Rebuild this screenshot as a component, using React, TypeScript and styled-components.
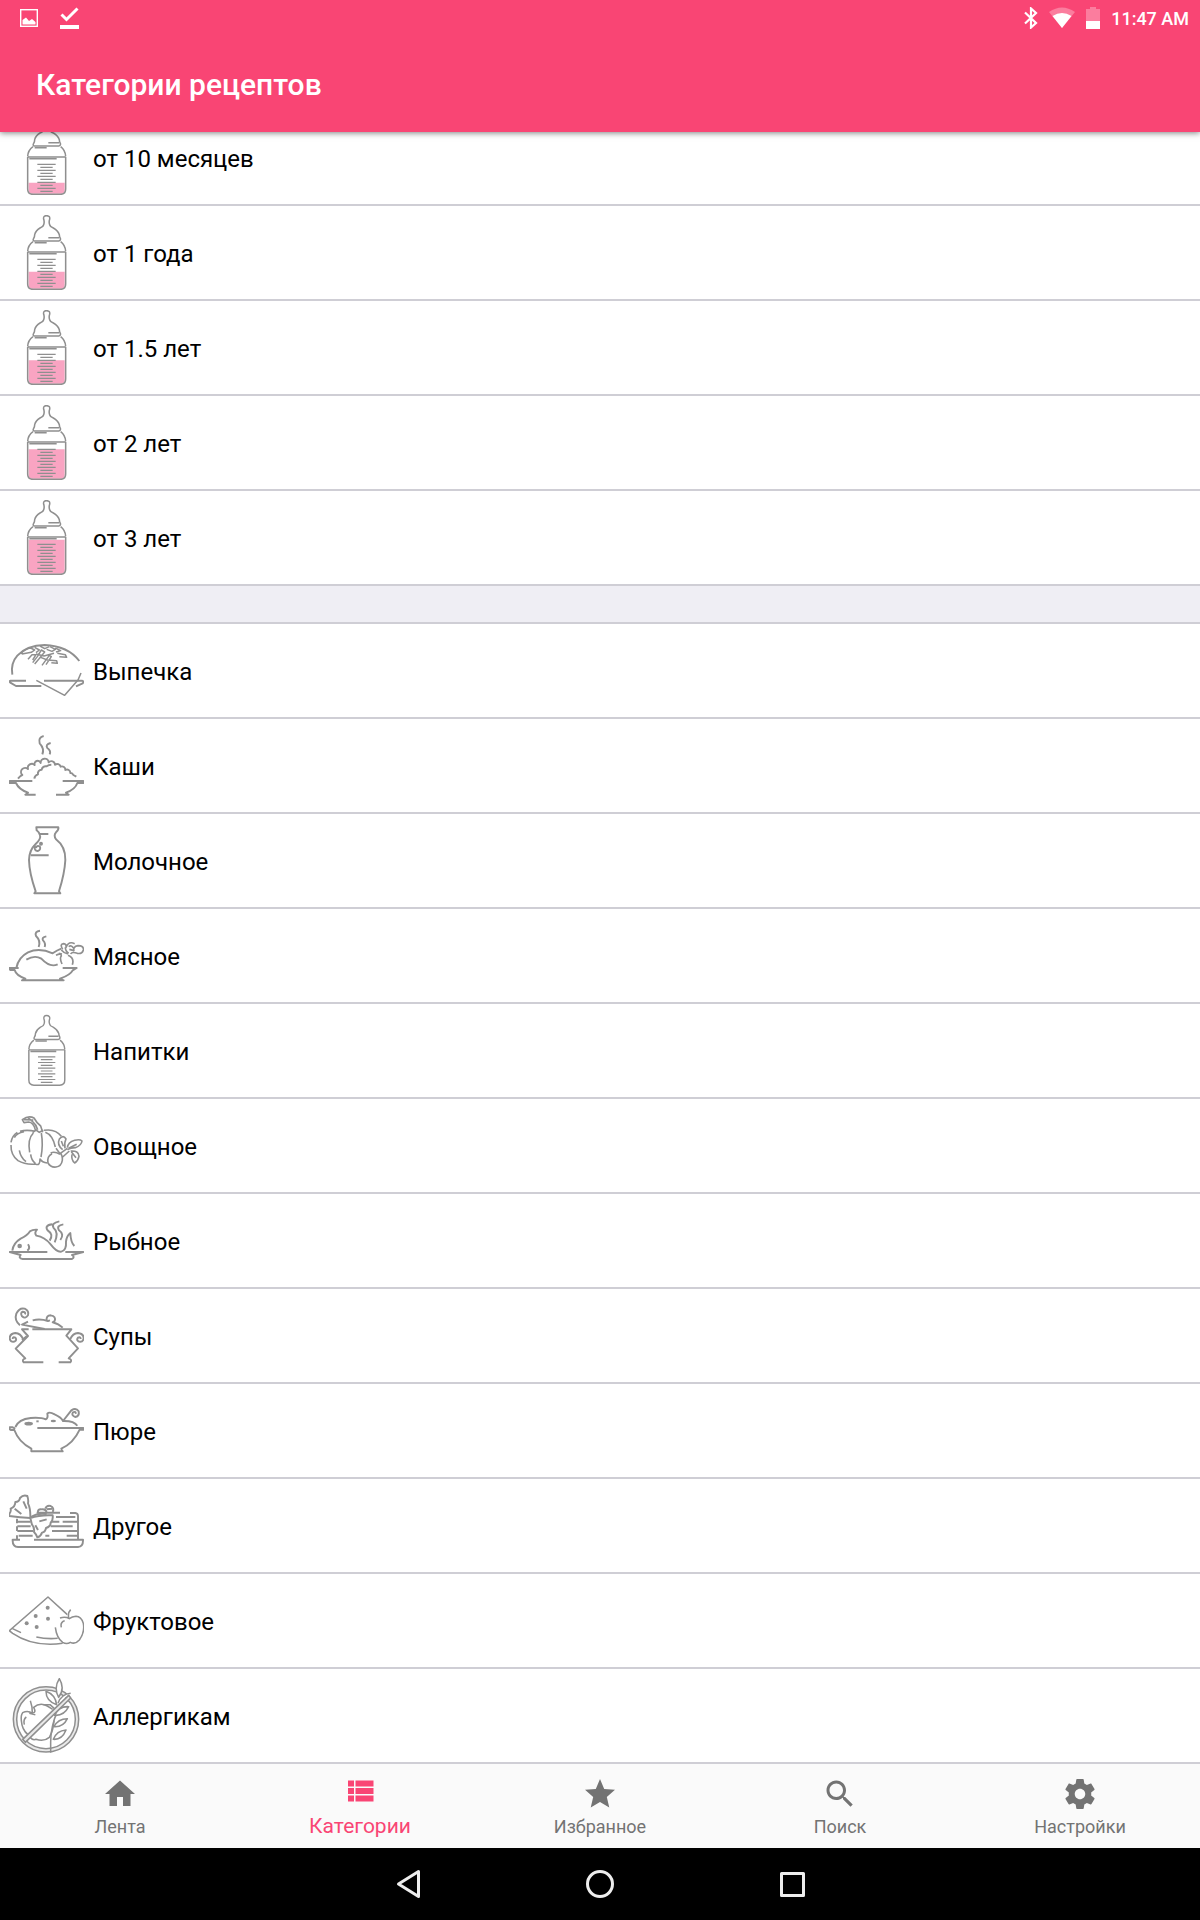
import React, { useLayoutEffect, useRef, useState } from "react";
import styled, { createGlobalStyle } from "styled-components";

const colors = {
  accent: "#f94574",
  divider: "#cfced5",
  gap: "#efeef4",
  bar: "#fafafa",
  muted: "#737373",
  line: "#8f8f8f",
  milk: "#f9a4c2",
};

const GlobalStyle = createGlobalStyle`
  *, *::before, *::after { box-sizing: border-box; }
  body {
    margin: 0;
    background: #fff;
    color: #000;
    font-family: Roboto, "Noto Sans", sans-serif;
  }
  button {
    margin: 0;
    padding: 0;
    border: 0;
    background: none;
    color: inherit;
    font: inherit;
    cursor: pointer;
  }
`;

const Screen = styled.div`
  display: flex;
  flex-direction: column;
  height: 100vh;
`;

const Header = styled.header`
  position: relative;
  z-index: 1;
  flex: none;
  background: ${colors.accent};
  color: #fff;
  box-shadow: 0 1px 6px rgba(0, 0, 0, 0.5);
`;

const StatusBar = styled.div`
  display: flex;
  justify-content: space-between;
  align-items: center;
  height: 36px;
  padding: 0 11px 0 20px;
`;

const StatusGroup = styled.div<{ $gap: number }>`
  display: flex;
  align-items: center;
  gap: ${(p) => p.$gap}px;
`;

const Clock = styled.span`
  padding-top: 2px;
  font-size: 18px;
  font-weight: 500;
  line-height: 24px;
`;

const Toolbar = styled.div`
  display: flex;
  align-items: center;
  height: 96px;
  padding: 2px 36px 0;
`;

const Title = styled.h1`
  margin: 0;
  font-size: 30px;
  font-weight: 500;
  line-height: 36px;
`;

const Content = styled.main`
  flex: 1;
  min-height: 0;
  overflow-y: auto;
  scrollbar-width: none;
`;

const List = styled.ul`
  margin: 0;
  padding: 0;
  list-style: none;

  & + & {
    border-top: 36px solid ${colors.gap};
  }
`;

const Item = styled.li`
  border-bottom: 2px solid ${colors.divider};

  ${List} + ${List} > &:first-child {
    border-top: 2px solid ${colors.divider};
  }
`;

const Row = styled.button`
  display: flex;
  align-items: center;
  gap: 9px;
  width: 100%;
  padding: 9px;
  text-align: left;
`;

const RowLabel = styled.span`
  padding-top: 2px;
  font-size: 24px;
  line-height: 30px;
`;

const Picture = styled.svg`
  flex: none;
  width: 75px;
  height: 75px;
  fill: none;
  stroke: ${colors.line};
  stroke-width: 5.8;
  stroke-linejoin: round;
`;

const TabBar = styled.nav`
  display: flex;
  flex: none;
  height: 84px;
  background: ${colors.bar};
`;

const Tab = styled.button<{ $active: boolean }>`
  display: flex;
  flex: 1;
  flex-direction: column;
  align-items: center;
  justify-content: space-between;
  padding: ${(p) => (p.$active ? 9 : 12)}px 0 9px;
  color: ${(p) => (p.$active ? colors.accent : colors.muted)};
  font-size: ${(p) => (p.$active ? 21 : 18)}px;
  line-height: ${(p) => (p.$active ? 26 : 24)}px;
`;

const TabIcon = styled.svg`
  width: 36px;
  height: 36px;
  fill: currentColor;
`;

const SystemBar = styled.footer`
  display: flex;
  flex: none;
  justify-content: center;
  height: 72px;
  background: #000;
`;

const SystemButton = styled.button`
  display: flex;
  align-items: center;
  justify-content: center;
  width: 192px;
`;

const SystemIcon = styled.svg`
  width: 36px;
  height: 36px;
  fill: none;
  stroke: #eee;
  stroke-width: 3;
  stroke-linejoin: round;
`;

/* Baby bottle, filled from the given level down to the bottom. */
const Bottle = ({ level, viewBox = "27 45 225 225" }: { level?: number; viewBox?: string }) => (
  <Picture viewBox={viewBox} aria-hidden="true">
    {level !== undefined && (
      <path
        d={`M86 ${level} H194 V254 Q194 266 183 266 H97 Q86 266 86 254 Z`}
        fill={colors.milk}
        stroke="none"
      />
    )}
    <g strokeWidth="4.6">
      <path d="M131 74 Q134 66 131 58 Q129 47 139 47 Q151 47 149 58 Q146 66 149 74 Q150 80 160 84 Q174 92 178 104 Q178 110 181 115 Q183 122 176 123 H104 Q97 122 101 115 Q104 110 104 104 Q107 92 120 84 Q130 80 131 74" />
      <path d="M145 113 H177 M104 128 H140 M99 125 Q84 136 83 154 M182 125 Q196 136 197 154 M83 156 H197 M88 161 H170" />
      <path d="M83 156 V252 Q83 268 99 268 H181 Q197 268 197 252 V156" />
    </g>
    <path
      d="M112 178 H167 M121 187 H158 M112 196 H167 M121 205 H158 M112 214 H167 M121 223 H158 M112 232 H167 M121 241 H158 M112 250 H167 M121 259 H158"
      strokeWidth="3.8"
    />
  </Picture>
);

const Bread = () => (
  <Picture viewBox="27 39 225 225" aria-hidden="true">
    <path d="M37 164 Q31 130 52 107 Q80 76 134 75 Q204 78 238 123" />
    <path d="M78 182 H32 Q26 183 31 188 L48 198 H124 M132 182 H246 Q253 184 248 190 L228 199" />
    <path d="M109 181 L194 226 L234 180 L243 159" strokeWidth="4.6" />
    <path
      d="M62 102 Q74 86 92 84 L104 90 L94 97 L66 102 M104 82 L118 90 L108 98 M120 78 L134 86 L148 80 M150 80 L166 88 L156 94 L140 88 M166 84 L182 92 L168 96 M172 100 L196 104 L200 112 L178 110 M84 118 L96 104 L108 104 L98 120 M98 128 L112 110 L124 90 L134 96 L116 118 L104 132 M126 136 L148 106 L154 110 L138 134 M122 112 L142 120 L170 122 L172 130 L154 128 M108 102 L132 108 L162 100"
      strokeWidth="4.4"
    />
  </Picture>
);

const Porridge = () => (
  <Picture viewBox="27 324 225 225" aria-hidden="true">
    <path d="M131 348 Q114 352 119 370 Q134 386 127 403 M152 369 Q135 373 142 384 Q154 392 149 403" />
    <path d="M54 476 Q61 467 67 465 A12 12 0 0 1 84 447 A12 12 0 0 1 104 435 A9 9 0 0 1 122 429 A12 12 0 0 1 146 427 A11 11 0 0 1 165 434 A11 11 0 0 1 182 440 A10 10 0 0 1 196 450 A10 10 0 0 1 211 459 A9 9 0 0 1 220 465 L229 470" />
    <path d="M103 476 Q104 466 114 463 A11 11 0 0 1 125 449 A12 12 0 0 1 140 439 Q146 434 154 434" />
    <path d="M97 483 H29 V489 H48 Q56 508 84 518 L76 524 H107 M188 483 H250 V489 H232 Q226 508 198 518 L206 524 H168" />
  </Picture>
);

const Jug = () => (
  <Picture viewBox="27 39 225 225" aria-hidden="true">
    <path d="M109 52 H175 Q177 59 168 67 Q160 76 168 88 Q197 110 196 150 Q194 190 177 244 L181 250 H103 L107 244 Q88 190 87 150 Q88 120 107 102 Q124 86 120 76 Q117 66 110 61 Z" />
    <path d="M119 72 H145 M92 136 H146 M104 106 Q102 124 114 123 Q124 118 119 109 Q110 105 108 114" />
    <circle cx="123" cy="101" r="3" />
  </Picture>
);

const Meat = () => (
  <Picture viewBox="27 324 225 225" aria-hidden="true">
    <path d="M120 362 Q103 364 108 378 Q123 392 116 411 M139 379 Q124 382 129 391 Q138 400 134 411" />
    <path d="M49 474 Q55 442 84 427 Q118 412 158 430 Q172 420 184 416" />
    <path d="M79 449 Q104 434 124 446 Q150 474 173 463" />
    <path
      d="M188 418 Q178 402 191 401 Q200 402 198 412 Q206 392 224 401 M196 412 Q196 424 206 430 M206 410 Q214 404 220 414 M184 420 Q192 430 204 432 M222 424 Q218 410 234 407 Q252 407 250 420 Q246 433 232 430 Q216 424 212 432 M168 436 Q184 428 184 438 Q178 444 186 462 M176 430 L186 432 M204 436 Q224 444 217 464 M208 418 L222 422"
      strokeWidth="5"
    />
    <path d="M56 474 H28 Q28 481 36 480 H44 Q48 496 76 506 L66 511 H191 L180 506 Q212 494 218 481 L230 474 H188" />
  </Picture>
);

const Pumpkin = () => (
  <Picture viewBox="27 309 225 225" aria-hidden="true">
    <g strokeWidth="4.8">
      <path d="M106 374 Q100 352 86 351 L72 353 L67 344 Q86 330 102 339 Q110 354 122 363 L128 382 M72 344 L100 345 M84 338 L98 350 Q108 358 113 374 M98 383 L108 375 L118 382 L130 376" />
      <path d="M60 379 Q80 373 106 379 M52 382 Q36 392 33 412 M33 420 Q32 450 54 467 Q76 480 108 477 M132 376 Q166 370 184 394 M43 398 Q50 384 72 380 M58 436 Q62 458 78 470 M100 384 Q82 402 89 442 M92 448 Q94 466 106 475 M124 384 Q130 420 123 456 M136 382 Q158 390 166 426 M168 430 L180 446 M108 478 Q120 482 120 462 Q126 472 142 474" />
      <path d="M156 446 Q140 454 144 474 Q152 488 168 486 Q184 484 187 466 Q188 450 180 444 M152 444 Q164 438 180 448 M180 446 L202 430 M188 456 L208 438" />
      <path d="M188 434 Q170 420 178 402 Q190 388 198 402 Q192 414 195 430 M184 408 L190 424 M202 428 Q204 412 224 406 Q240 402 246 408 Q244 422 226 428 Q212 428 202 434 M206 430 L230 418 M212 438 Q236 436 237 454 Q234 468 224 474 Q213 464 216 448 M214 440 L228 458" />
    </g>
  </Picture>
);

const Fish = () => (
  <Picture viewBox="27 24 225 225" aria-hidden="true">
    <path d="M37 167 Q40 144 62 131 Q82 122 90 109 Q98 103 111 104 Q102 114 109 122 Q134 126 152 148 Q170 172 184 170 Q200 166 198 140 Q200 122 211 114 Q212 142 223 153" />
    <circle cx="59" cy="153" r="4" fill={colors.line} />
    <path d="M84 148 Q92 160 82 167" />
    <path d="M157 88 Q132 91 143 106 Q162 118 149 137 M178 79 Q152 84 161 99 Q177 112 164 142 M190 88 Q168 91 177 106 Q194 118 181 135" />
    <path d="M142 171 H29 L62 180 Q54 190 68 192 H216 Q226 186 216 180 L250 171 H196" />
  </Picture>
);

const Pot = () => (
  <Picture viewBox="27 309 225 225" aria-hidden="true">
    <path d="M86 403 H66 L84 423 L47 461 L76 490 Q64 494 71 502 H130 M97 403 H214 L199 422 L234 460 L206 490 Q218 494 211 502 H176" />
    <path d="M69 432 Q62 415 46 414 Q29 416 29 430 Q31 442 43 440 Q52 436 46 428 Q38 424 38 432 M66 436 L80 424 M211 432 Q218 415 234 414 Q251 416 251 430 Q249 442 237 440 Q228 436 234 428 Q242 424 242 432" />
    <path d="M98 376 Q120 370 144 378 L150 376 M140 376 Q138 361 152 361 Q169 364 164 378 L158 382 Q176 386 188 398" />
    <path d="M60 391 Q42 376 49 356 Q58 337 74 341 Q88 348 84 361 Q76 373 66 364 Q60 354 68 350 Q78 350 75 358 M84 380 L66 389 L134 402" />
  </Picture>
);

const Puree = () => (
  <Picture viewBox="27 39 225 225" aria-hidden="true">
    <path d="M46 141 Q56 118 92 114 Q124 112 137 118 Q145 114 142 101 Q148 94 164 103 Q184 112 189 123 Q222 122 232 137" />
    <path d="M189 123 L214 91 Q228 82 236 94 Q239 108 226 111 Q213 107 219 97 Q226 93 228 101" />
    <ellipse cx="86" cy="131" rx="10" ry="2.5" />
    <ellipse cx="160" cy="123" rx="5" ry="1" />
    <path d="M109 124 H116" />
    <path d="M112 144 H250 V149 H239 Q220 190 184 206 L188 214 H94 V206 Q56 186 43 150 H33 Q27 148 29 142 H38 L46 146" />
  </Picture>
);

const Cake = () => (
  <Picture viewBox="27 324 225 225" aria-hidden="true">
    <path d="M60 479 H38 Q37 500 54 501 H234 Q250 500 249 479 H102" />
    <path d="M110 398 H180 M210 399 H226 Q234 400 234 408 V478 M168 411 H226 M52 425 H92 M146 425 H178 M188 425 H234 M52 439 H92 M152 439 H218 M52 453 H100 M156 453 H234 M56 467 H98 M136 467 H148 M200 467 H234 M51 416 V430 M51 439 V453 M51 466 V479" />
    <path d="M114 398 Q112 387 124 388 Q138 386 140 398 M136 386 Q140 375 152 378 Q164 384 158 396 M140 388 L156 386" />
    <path d="M28 402 Q34 394 32 386 Q46 380 46 366 Q58 366 60 354 Q70 343 82 348 Q86 360 84 370 Q92 386 91 414 Q60 412 28 408 Z M44 386 L64 402 M70 364 L80 386" />
    <path
      d="M91 414 Q120 404 158 406 Q160 420 152 428 Q152 440 138 444 Q136 456 126 458 Q122 470 112 472 Q108 462 102 456 Q104 442 96 434 Z"
      fill="#fff"
    />
    <path d="M106 436 L114 450 M118 424 L140 418 M92 412 Q110 398 140 402" />
  </Picture>
);

const Fruit = () => (
  <Picture viewBox="27 39 225 225" aria-hidden="true">
    <g strokeWidth="4.6">
      <path d="M202 134 L144 81 L28 182 L38 190 Q100 232 188 220 M36 175 L63 188 M109 201 Q140 208 173 205" />
      <path d="M166 172 Q170 204 188 217 Q200 224 211 217 Q226 224 238 210 Q255 186 250 160 Q244 140 228 139 Q216 140 208 146 Q196 139 180 144 M206 144 Q203 128 212 119 M184 172 Q180 156 194 152" />
    </g>
    <g fill={colors.line} stroke="none">
      <circle cx="143" cy="113" r="6" />
      <circle cx="107" cy="138" r="6" />
      <circle cx="144" cy="146" r="6" />
      <circle cx="80" cy="160" r="6" />
      <circle cx="110" cy="171" r="6" />
    </g>
  </Picture>
);

const Allergy = () => (
  <Picture viewBox="27 324 225 225" aria-hidden="true">
    <g strokeWidth="4.6">
      <circle cx="138" cy="448" r="94" stroke="#e9e9e9" strokeWidth="8" />
      <circle cx="138" cy="448" r="98" />
      <circle cx="138" cy="448" r="88" />
      <path d="M97 432 Q98 410 91 392 M88 430 L106 434 M84 494 Q66 480 64 452 Q62 436 68 428 Q84 420 97 430 Q110 428 101 412 Q120 396 142 408 L158 418 M162 452 Q160 482 148 502 Q132 516 108 508 Q98 512 90 502 M73 464 Q69 448 79 441" />
      <path d="M152 548 V516 Q152 470 172 424 M130 404 L150 404 L166 418" />
      <path
        d="M178 326 Q160 354 176 382 Q196 356 178 326 Z M138 364 Q138 394 170 404 Q166 374 138 364 Z M206 410 Q176 408 164 436 Q192 438 206 410 Z M202 446 Q174 446 162 470 Q190 472 202 446 Z M198 480 Q170 482 160 508 Q186 510 198 480 Z M212 370 Q184 372 174 400"
        fill="#fff"
      />
      <path d="M68 508 L206 376 L212 384 L76 517 Z" fill="#e9e9e9" />
    </g>
  </Picture>
);

const ages = [
  { label: "от 10 месяцев", level: 233 },
  { label: "от 1 года", level: 215 },
  { label: "от 1.5 лет", level: 196 },
  { label: "от 2 лет", level: 178 },
  { label: "от 3 лет", level: 164 },
];

const dishes = [
  { label: "Выпечка", icon: <Bread /> },
  { label: "Каши", icon: <Porridge /> },
  { label: "Молочное", icon: <Jug /> },
  { label: "Мясное", icon: <Meat /> },
  { label: "Напитки", icon: <Bottle viewBox="20 39 238 238" /> },
  { label: "Овощное", icon: <Pumpkin /> },
  { label: "Рыбное", icon: <Fish /> },
  { label: "Супы", icon: <Pot /> },
  { label: "Пюре", icon: <Puree /> },
  { label: "Другое", icon: <Cake /> },
  { label: "Фруктовое", icon: <Fruit /> },
  { label: "Аллергикам", icon: <Allergy /> },
];

const tabs = [
  { label: "Лента", path: "M10 20v-6h4v6h5v-8h3L12 3 2 12h3v8z" },
  {
    label: "Категории",
    path: "M4 14h4v-4H4v4zm0 5h4v-4H4v4zM4 9h4V5H4v4zm5 5h12v-4H9v4zm0 5h12v-4H9v4zM9 5v4h12V5H9z",
  },
  {
    label: "Избранное",
    path: "M12 17.27L18.18 21l-1.64-7.03L22 9.24l-7.19-.61L12 2 9.19 8.63 2 9.24l5.46 4.73L5.82 21z",
  },
  {
    label: "Поиск",
    path: "M15.5 14h-.79l-.28-.27C15.41 12.59 16 11.11 16 9.5 16 5.91 13.09 3 9.5 3S3 5.91 3 9.5 5.91 16 9.5 16c1.61 0 3.09-.59 4.23-1.57l.27.28v.79l5 4.99L20.49 19l-4.99-5zm-6 0C7.01 14 5 11.99 5 9.5S7.01 5 9.5 5 14 7.01 14 9.5 11.99 14 9.5 14z",
  },
  {
    label: "Настройки",
    path: "M19.43 12.98c.04-.32.07-.64.07-.98s-.03-.66-.07-.98l2.11-1.65c.19-.15.24-.42.12-.64l-2-3.46c-.12-.22-.39-.3-.61-.22l-2.49 1c-.52-.4-1.08-.73-1.69-.98l-.38-2.65C14.46 2.18 14.25 2 14 2h-4c-.25 0-.46.18-.49.42l-.38 2.65c-.61.25-1.17.59-1.69.98l-2.49-1c-.23-.09-.49 0-.61.22l-2 3.46c-.13.22-.07.49.12.64l2.11 1.65c-.04.32-.07.65-.07.98s.03.66.07.98l-2.11 1.65c-.19.15-.24.42-.12.64l2 3.46c.12.22.39.3.61.22l2.49-1c.52.4 1.08.73 1.69.98l.38 2.65c.03.24.24.42.49.42h4c.25 0 .46-.18.49-.42l.38-2.65c.61-.25 1.17-.59 1.69-.98l2.49 1c.23.09.49 0 .61-.22l2-3.46c.12-.22.07-.49-.12-.64l-2.11-1.65zM12 15.5c-1.93 0-3.5-1.57-3.5-3.5s1.57-3.5 3.5-3.5 3.5 1.57 3.5 3.5-1.57 3.5-3.5 3.5z",
  },
];

export default function App() {
  const content = useRef<HTMLElement>(null);
  const [active, setActive] = useState("Категории");

  // The list opens at its end, where the dish categories are.
  useLayoutEffect(() => {
    if (content.current) content.current.scrollTop = content.current.scrollHeight;
  }, []);

  return (
    <>
      <GlobalStyle />
      <Screen>
        <Header>
          <StatusBar>
            <StatusGroup $gap={22}>
              <svg width="18" height="18" viewBox="0 0 18 18" aria-hidden="true">
                <rect x="0.7" y="0.7" width="16.6" height="16.6" fill="none" stroke="#fff" strokeWidth="1.4" />
                <path d="M2.5 15.5V11L6 8.5L9 12L12 10L15.5 13V15.5Z" fill="#fff" />
              </svg>
              <svg width="19" height="22" viewBox="0 0 19 22" aria-hidden="true">
                <path d="M1.5 7.5L6.5 12.5L17.5 1.5" fill="none" stroke="#fff" strokeWidth="3" />
                <path d="M0 18H19V22H0Z" fill="#fff" />
              </svg>
            </StatusGroup>
            <StatusGroup $gap={11}>
              <svg width="14" height="22" viewBox="0 0 14 22" aria-hidden="true">
                <path d="M1 5.5L12 16L7 20.5V1.5L12 6L1 16.5" fill="none" stroke="#fff" strokeWidth="2.2" />
              </svg>
              <svg width="26" height="22" viewBox="0 0 26 22" aria-hidden="true">
                <path d="M13 21L0 5Q13 -4 26 5Z" fill="#fff" fillOpacity="0.3" />
                <path d="M13 21L3.5 9Q13 3 22.5 9Z" fill="#fff" />
              </svg>
              <svg width="14" height="22" viewBox="0 0 14 22" aria-hidden="true">
                <path d="M0 2H4V0H10V2H14V14H0Z" fill="#fff" fillOpacity="0.3" />
                <path d="M0 14H14V22H0Z" fill="#fff" />
              </svg>
              <Clock>11:47 AM</Clock>
            </StatusGroup>
          </StatusBar>
          <Toolbar>
            <Title>Категории рецептов</Title>
          </Toolbar>
        </Header>

        <Content ref={content}>
          <List>
            {ages.map((age) => (
              <Item key={age.label}>
                <Row type="button">
                  <Bottle level={age.level} />
                  <RowLabel>{age.label}</RowLabel>
                </Row>
              </Item>
            ))}
          </List>
          <List>
            {dishes.map((dish) => (
              <Item key={dish.label}>
                <Row type="button">
                  {dish.icon}
                  <RowLabel>{dish.label}</RowLabel>
                </Row>
              </Item>
            ))}
          </List>
        </Content>

        <TabBar>
          {tabs.map((tab) => (
            <Tab
              key={tab.label}
              type="button"
              $active={tab.label === active}
              aria-current={tab.label === active ? "page" : undefined}
              onClick={() => setActive(tab.label)}
            >
              <TabIcon viewBox="0 0 24 24" aria-hidden="true">
                <path d={tab.path} />
              </TabIcon>
              {tab.label}
            </Tab>
          ))}
        </TabBar>

        <SystemBar>
          <SystemButton type="button" aria-label="Назад">
            <SystemIcon viewBox="0 0 36 36">
              <path d="M28.5 5.5V30.5L8.5 18Z" />
            </SystemIcon>
          </SystemButton>
          <SystemButton type="button" aria-label="Домой">
            <SystemIcon viewBox="0 0 36 36">
              <circle cx="18" cy="18" r="12.5" />
            </SystemIcon>
          </SystemButton>
          <SystemButton type="button" aria-label="Недавние">
            <SystemIcon viewBox="0 0 36 36">
              <rect x="7.5" y="7.5" width="22" height="22" />
            </SystemIcon>
          </SystemButton>
        </SystemBar>
      </Screen>
    </>
  );
}
